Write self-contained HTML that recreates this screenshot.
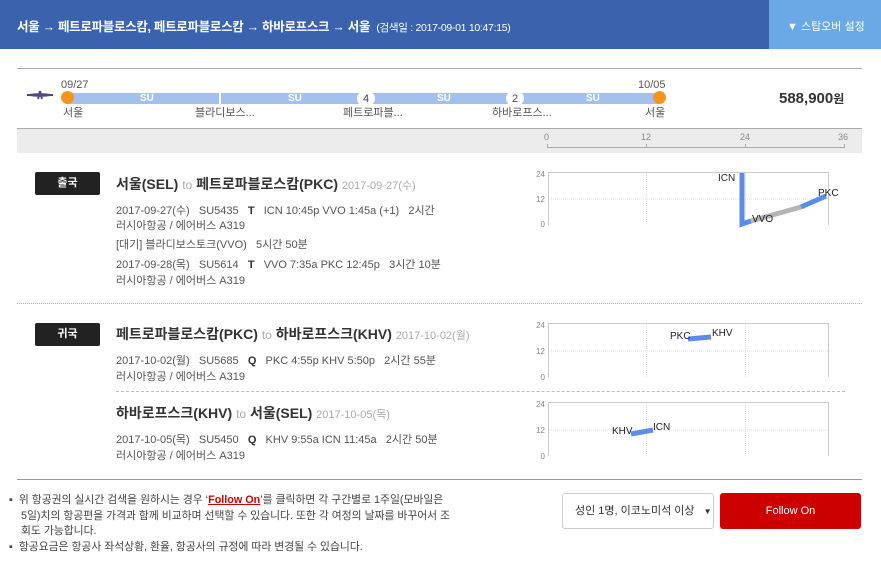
<!DOCTYPE html>
<html><head><meta charset="utf-8"><style>
*{margin:0;padding:0;box-sizing:border-box}
body{width:881px;height:575px;position:relative;background:#fff;font-family:"Liberation Sans","Noto Sans CJK KR",sans-serif;color:#444;overflow:hidden}
.a{position:absolute;white-space:nowrap}
.s{font-size:11px;color:#555}
.t{font-size:14px;font-weight:bold;color:#333}
.t i{font-style:normal;font-weight:normal;font-size:12px;color:#aaa}
.t em{font-style:normal;font-weight:normal;font-size:11px;color:#aaa}
.b{background:#222;color:#fff;font-size:11px;font-weight:bold;text-align:center;line-height:23px;width:65px;height:23px;border-radius:2px}
.su{font-size:10px;font-weight:bold;color:#fff}
</style></head><body>
<div class="a" style="left:0;top:0;width:769px;height:49px;background:#3a62ad"></div>
<div class="a" style="left:769px;top:0;width:112px;height:49px;background:#6aa8e6"></div>
<div class="a" style="left:17px;top:16px;font-size:12.5px;font-weight:bold;color:#fff;letter-spacing:-0.3px">서울 → 페트로파블로스캄, 페트로파블로스캄 → 하바로프스크 → 서울 <span style="font-weight:normal;font-size:10.5px;margin-left:3px">(검색일 : 2017-09-01 10:47:15)</span></div>
<div class="a" style="left:787px;top:18px;font-size:11px;color:#fff">&#9660; 스탑오버 설정</div>

<div class="a" style="left:17px;top:68px;width:845px;height:1px;background:#aaa"></div>
<svg class="a" style="left:26px;top:89px" width="28" height="12"><path d="M1 6L27 6M14 2L12 10M14 2L16 10" stroke="#4a4a85" stroke-width="2" fill="none"/><ellipse cx="14" cy="6" rx="12" ry="1.8" fill="#4a4a85"/></svg>
<div class="a" style="left:68px;top:93px;width:591px;height:11px;background:#a4c0ef"></div>
<div class="a" style="left:219px;top:93px;width:2px;height:11px;background:#fff"></div>
<div class="a su" style="left:140px;top:93px">SU</div>
<div class="a su" style="left:288px;top:93px">SU</div>
<div class="a su" style="left:437px;top:93px">SU</div>
<div class="a su" style="left:586px;top:93px">SU</div>
<div class="a" style="left:357px;top:91px;width:18px;height:15px;border-radius:8px;background:#fff;font-size:11px;text-align:center;line-height:17px">4</div>
<div class="a" style="left:506px;top:91px;width:18px;height:15px;border-radius:8px;background:#fff;font-size:11px;text-align:center;line-height:17px">2</div>
<div class="a" style="left:61px;top:91px;width:13px;height:13px;border-radius:50%;background:#f7941d"></div>
<div class="a" style="left:653px;top:91px;width:13px;height:13px;border-radius:50%;background:#f7941d"></div>
<div class="a s" style="left:61px;top:79px">09/27</div>
<div class="a s" style="left:638px;top:79px">10/05</div>
<div class="a s" style="left:63px;top:104px">서울</div>
<div class="a s" style="left:195px;top:104px">블라디보스...</div>
<div class="a s" style="left:343px;top:104px">페트로파블...</div>
<div class="a s" style="left:492px;top:104px">하바로프스...</div>
<div class="a s" style="left:645px;top:104px">서울</div>
<div class="a" style="left:779px;top:90px;font-size:15px;font-weight:bold;color:#333">588,900<span style="font-size:12px">원</span></div>

<div class="a" style="left:17px;top:128px;width:845px;height:25px;background:#ececec;border-top:1px solid #aaa"></div>
<div class="a" style="left:547px;top:147px;width:298px;height:1px;background:#aaa"></div>
<div class="a" style="left:547px;top:144px;width:1px;height:4px;background:#aaa"></div>
<div class="a" style="left:646px;top:144px;width:1px;height:4px;background:#aaa"></div>
<div class="a" style="left:745px;top:144px;width:1px;height:4px;background:#aaa"></div>
<div class="a" style="left:844px;top:144px;width:1px;height:4px;background:#aaa"></div>
<div class="a" style="left:544px;top:132px;font-size:9px;color:#888">0</div>
<div class="a" style="left:641px;top:132px;font-size:9px;color:#888">12</div>
<div class="a" style="left:740px;top:132px;font-size:9px;color:#888">24</div>
<div class="a" style="left:838px;top:132px;font-size:9px;color:#888">36</div>

<div class="a b" style="left:35px;top:172px">출국</div>
<div class="a t" style="left:116px;top:174px">서울(SEL) <i>to</i> 페트로파블로스캄(PKC) <em>2017-09-27(수)</em></div>
<div class="a s" style="left:116px;top:202px">2017-09-27(수) &nbsp; SU5435 &nbsp; <b style="color:#333">T</b> &nbsp; ICN 10:45p VVO 1:45a (+1) &nbsp; 2시간</div>
<div class="a s" style="left:116px;top:217px">러시아항공 / 에어버스 A319</div>
<div class="a s" style="left:116px;top:236px">[대기] 블라디보스토크(VVO) &nbsp; 5시간 50분</div>
<div class="a s" style="left:116px;top:256px">2017-09-28(목) &nbsp; SU5614 &nbsp; <b style="color:#333">T</b> &nbsp; VVO 7:35a PKC 12:45p &nbsp; 3시간 10분</div>
<div class="a s" style="left:116px;top:272px">러시아항공 / 에어버스 A319</div>
<div class="a" style="left:17px;top:303px;width:845px;border-top:1px dotted #aaa"></div>

<div class="a b" style="left:35px;top:323px">귀국</div>
<div class="a t" style="left:116px;top:324px">페트로파블로스캄(PKC) <i>to</i> 하바로프스크(KHV) <em>2017-10-02(월)</em></div>
<div class="a s" style="left:116px;top:352px">2017-10-02(월) &nbsp; SU5685 &nbsp; <b style="color:#333">Q</b> &nbsp; PKC 4:55p KHV 5:50p &nbsp; 2시간 55분</div>
<div class="a s" style="left:116px;top:368px">러시아항공 / 에어버스 A319</div>
<div class="a" style="left:116px;top:391px;width:729px;border-top:1px dashed #bbb"></div>
<div class="a t" style="left:116px;top:403px">하바로프스크(KHV) <i>to</i> 서울(SEL) <em>2017-10-05(목)</em></div>
<div class="a s" style="left:116px;top:431px">2017-10-05(목) &nbsp; SU5450 &nbsp; <b style="color:#333">Q</b> &nbsp; KHV 9:55a ICN 11:45a &nbsp; 2시간 50분</div>
<div class="a s" style="left:116px;top:447px">러시아항공 / 에어버스 A319</div>
<div class="a" style="left:17px;top:479px;width:845px;height:1px;background:#999"></div>

<svg class="a" style="left:0;top:0" width="881" height="575" font-family="Liberation Sans, sans-serif">
<g font-size="8" fill="#888" text-anchor="end">
<text x="545" y="177">24</text><text x="545" y="202">12</text><text x="545" y="227">0</text>
<text x="545" y="328">24</text><text x="545" y="354">12</text><text x="545" y="380">0</text>
<text x="545" y="407">24</text><text x="545" y="433">12</text><text x="545" y="459">0</text>
</g>
<g fill="none" stroke="#ccc">
<path d="M548.5 225V172.5H828.5V225"/><path d="M548.5 377V323.5H828.5V377"/><path d="M548.5 456V402.5H828.5V456"/>
</g>
<g fill="none" stroke="#ddd" stroke-dasharray="1,1">
<path d="M549 199H828M646.5 173V225M745.5 173V225"/>
<path d="M549 351H828M646.5 324V377M745.5 324V377"/>
<path d="M549 430H828M646.5 403V456M745.5 403V456"/>
</g>
<g fill="none" stroke-width="5">
<path d="M742 173V224L751 221" stroke="#5b8de8"/>
<path d="M751 221L801 207" stroke="#b5b5b5"/>
<path d="M801 207L826 196" stroke="#5b8de8"/>
<path d="M688 339L711 337" stroke="#5b8de8"/>
<path d="M631 434L653 430" stroke="#5b8de8"/>
</g>
<g font-size="10" fill="#222">
<text x="718" y="181">ICN</text><text x="752" y="222">VVO</text><text x="818" y="196">PKC</text>
<text x="670" y="339">PKC</text><text x="712" y="336">KHV</text>
<text x="612" y="434">KHV</text><text x="653" y="430">ICN</text>
</g>
</svg>

<div class="a" style="left:9px;top:493px;font-size:10.8px;line-height:15.5px;color:#444;white-space:normal;width:470px">
<div>▪ &nbsp;위 항공권의 실시간 검색을 원하시는 경우 ‘<b style="color:#c00;text-decoration:underline">Follow On</b>’를 클릭하면 각 구간별로 1주일(모바일은<br>&nbsp;&nbsp;&nbsp;&nbsp;5일)치의 항공편을 가격과 함께 비교하며 선택할 수 있습니다. 또한 각 여정의 날짜를 바꾸어서 조<br>&nbsp;&nbsp;&nbsp;&nbsp;회도 가능합니다.</div>
<div>▪ &nbsp;항공요금은 항공사 좌석상황, 환율, 항공사의 규정에 따라 변경될 수 있습니다.</div>
</div>
<div class="a" style="left:562px;top:493px;width:152px;height:36px;border:1px solid #ccc;border-radius:3px;font-size:11px;line-height:34px;padding-left:12px;color:#333">성인 1명, 이코노미석 이상 <span style="font-size:8px;margin-left:6px">▼</span></div>
<div class="a" style="left:720px;top:493px;width:141px;height:36px;background:#cc0000;border-radius:3px;color:#fff;font-size:11px;text-align:center;line-height:36px">Follow On</div>
</body></html>
